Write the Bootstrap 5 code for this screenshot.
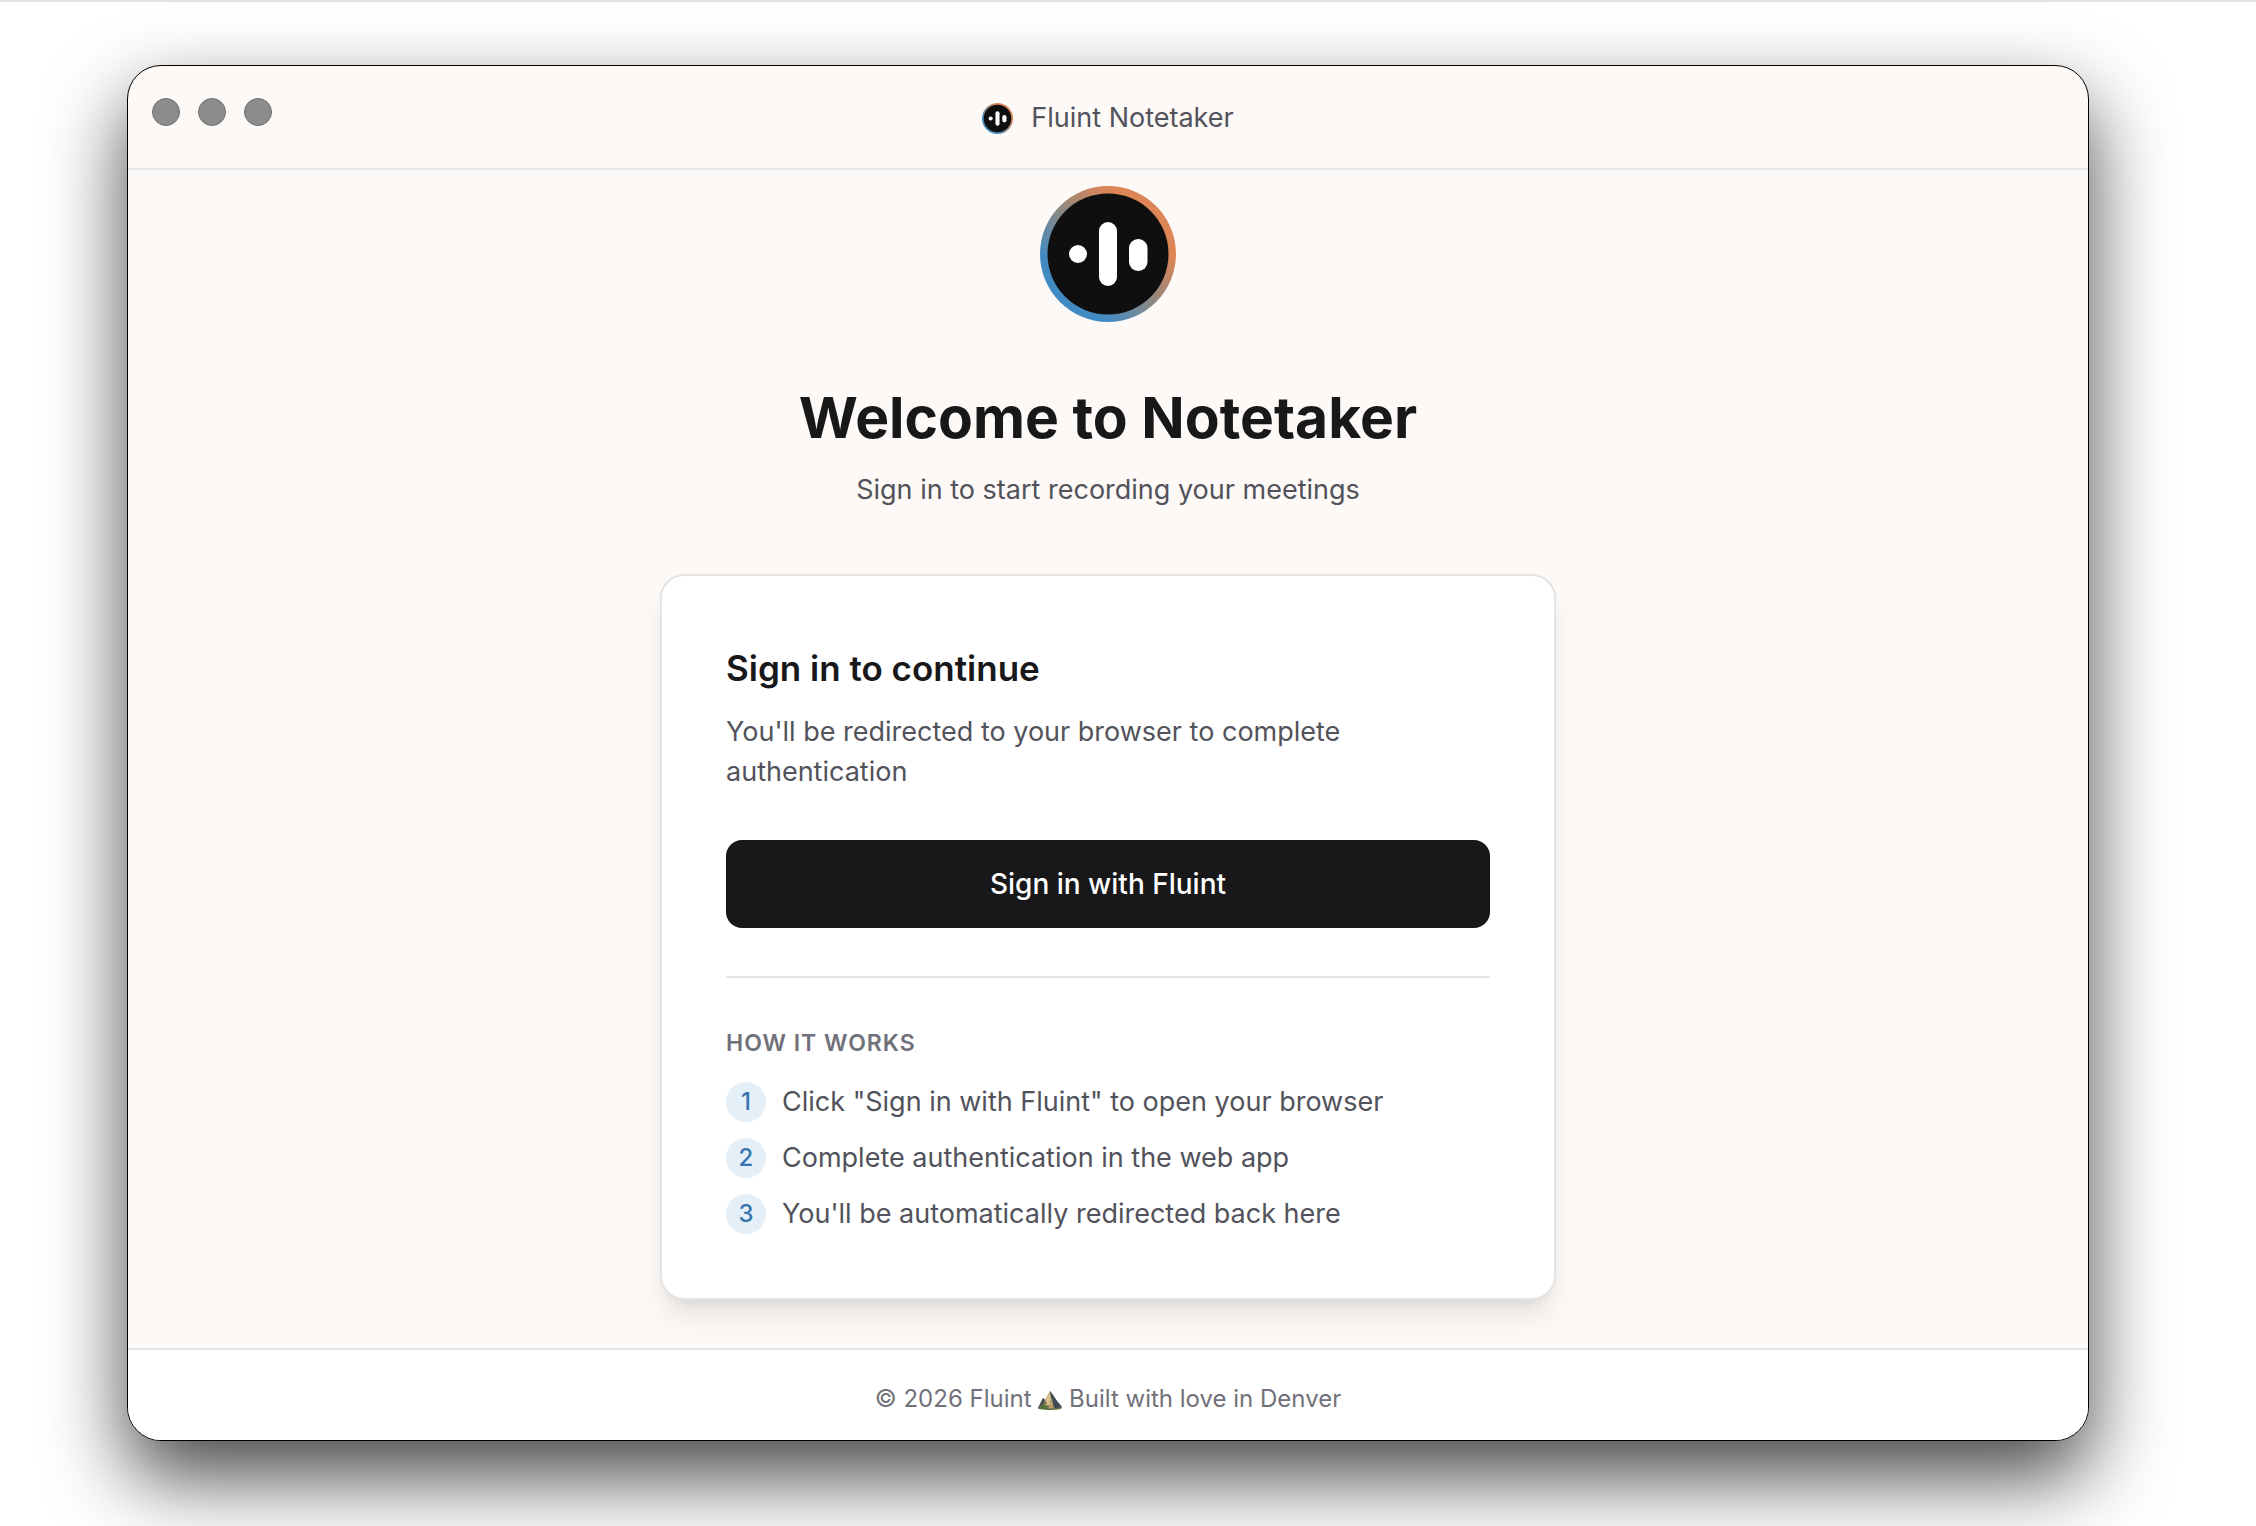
<!DOCTYPE html>
<html lang="en">
<head>
<meta charset="utf-8">
<meta name="viewport" content="width=device-width, initial-scale=1">
<title>Fluint Notetaker</title>
<link href="https://cdn.jsdelivr.net/npm/bootstrap@5.3.0/dist/css/bootstrap.min.css" rel="stylesheet">
<style>
  body { font-family: Inter, "Liberation Sans", sans-serif; font-size: 27px; line-height: 40px; color: #52525b; background: #fff; }
  .desktop { border-top: 2px solid #e2e2e2; padding: 63px 167px 85px 127px; overflow: hidden; }
  .app-window { border: 1px solid #000; border-radius: 34px; background: #fdf9f6; box-shadow: 0 36px 80px rgba(0,0,0,.72); overflow: hidden; }
  .titlebar { min-height: 104px; border-bottom: 2px solid #e5e7eb; }
  .title-side { padding: 0 24px 10px; }
  .lights { gap: 18px; }
  .light { width: 28px; height: 28px; border-radius: 50%; background: #8c8c8c; border: 1px solid #6f6f6f; padding: 0; }
  .app-name { line-height: 32px; gap: 18px; padding-top: 2px; }
  .welcome { padding: 16px 24px 48px; }
  .welcome h1 { font-size: 57px; line-height: 72px; font-weight: 700; color: #18181b; margin: 60px 0 16px; }
  .signin-card { max-width: 896px; width: 100%; margin-top: 64px; padding: 64px; border: 2px solid #e4e4e4; border-radius: 24px; color: inherit; box-shadow: 0 20px 30px -6px rgba(0,0,0,.1), 0 8px 12px -8px rgba(0,0,0,.1); }
  .signin-card h2 { font-size: 35px; line-height: 56px; font-weight: 600; color: #18181b; margin: 0 0 16px; }
  .signin-btn { --bs-btn-bg: #18181b; --bs-btn-color: #fff; --bs-btn-hover-bg: #27272a; --bs-btn-hover-color: #fff; --bs-btn-border-width: 0; --bs-btn-border-radius: 16px; --bs-btn-font-size: 28px; --bs-btn-font-weight: 500; --bs-btn-padding-y: 24px; --bs-btn-line-height: 40px; margin: 48px 0; }
  .how { border-top: 2px solid #e4e4e4; padding-top: 49px; }
  .how h3 { font-size: 23px; line-height: 32px; font-weight: 600; color: #71717a; letter-spacing: 1px; margin: 0 0 23px; }
  .step-num { width: 40px; height: 40px; border-radius: 50%; background: #e4eff8; color: #3577ae; font-size: 24px; font-weight: 500; }
  .page-foot { border-top: 2px solid #e4e4e7; background: #fff; color: #71717a; font-size: 24px; line-height: 32px; padding: 33px 24px 25px; }
</style>
<script src="https://cdn.jsdelivr.net/npm/bootstrap@5.3.0/dist/js/bootstrap.bundle.min.js"></script>
</head>
<body>
<div class="desktop">
  <div class="app-window">
    <header class="titlebar row g-0 align-items-center">
      <div class="col title-side lights d-flex">
        <button class="light" aria-label="Close"></button>
        <button class="light" aria-label="Minimize"></button>
        <button class="light" aria-label="Zoom"></button>
      </div>
      <div class="col-auto app-name d-flex align-items-center">
        <svg width="31" height="31" viewBox="0 0 136 136" aria-hidden="true"><use href="#logo"/></svg>
        <span>Fluint Notetaker</span>
      </div>
      <div class="col title-side"></div>
    </header>
    <main class="welcome d-flex flex-column align-items-center">
      <svg width="136" height="136" viewBox="0 0 136 136" aria-hidden="true">
        <defs>
          <linearGradient id="ring" x1="0" y1="1" x2="1" y2="0">
            <stop offset=".25" stop-color="#428bc2"/><stop offset=".5" stop-color="#91887f"/><stop offset=".73" stop-color="#dc8556"/>
          </linearGradient>
        </defs>
        <g id="logo">
          <circle cx="68" cy="68" r="68" fill="url(#ring)"/>
          <circle cx="68" cy="68" r="60.5" fill="#0f0f0f"/>
          <circle cx="38" cy="68" r="9" fill="#fff"/>
          <rect x="59" y="36" width="18" height="64" rx="9" fill="#fff"/>
          <rect x="89" y="53" width="18.5" height="32" rx="9" fill="#fff"/>
        </g>
      </svg>
      <h1 class="text-center">Welcome to Notetaker</h1>
      <p class="mb-0 text-center">Sign in to start recording your meetings</p>
      <section class="card signin-card">
        <h2>Sign in to continue</h2>
        <p class="mb-0">You'll be redirected to your browser to complete authentication</p>
        <button class="btn signin-btn w-100" type="button">Sign in with Fluint</button>
        <div class="how">
          <h3>HOW IT WORKS</h3>
          <ol class="list-unstyled d-flex flex-column gap-3 mb-0">
            <li class="d-flex gap-3"><span class="step-num d-flex align-items-center justify-content-center flex-shrink-0">1</span><span>Click "Sign in with Fluint" to open your browser</span></li>
            <li class="d-flex gap-3"><span class="step-num d-flex align-items-center justify-content-center flex-shrink-0">2</span><span>Complete authentication in the web app</span></li>
            <li class="d-flex gap-3"><span class="step-num d-flex align-items-center justify-content-center flex-shrink-0">3</span><span>You'll be automatically redirected back here</span></li>
          </ol>
        </div>
      </section>
    </main>
    <footer class="page-foot text-center">© 2026 Fluint
      <svg width="24" height="20" viewBox="0 0 24 20" role="img" aria-label="Mountain">
        <path d="M0 18 L5 8 7 10 12 1 15 5 19 11 24 17 23 19 12 20 1 19Z" fill="#8b7a5c"/>
        <path d="M12 1 L7 10 9 13 7 18 12 15 13 8Z" fill="#d9bf8b"/>
        <path d="M12 1 L13 8 17 19 24 17 19 11 15 5Z" fill="#3f4b52"/>
        <path d="M14 7 L12 15 10 19 15 18Z" fill="#c0a16d"/>
        <path d="M5 8 L0 18 4 17 7 10Z" fill="#485258"/>
        <path d="M0 18 L4 15 7 12 6 16 11 15 9 18 15 19 20 18 23 19 12 20 1 19Z" fill="#557238"/>
      </svg>
      Built with love in Denver</footer>
  </div>
</div>
</body>
</html>
